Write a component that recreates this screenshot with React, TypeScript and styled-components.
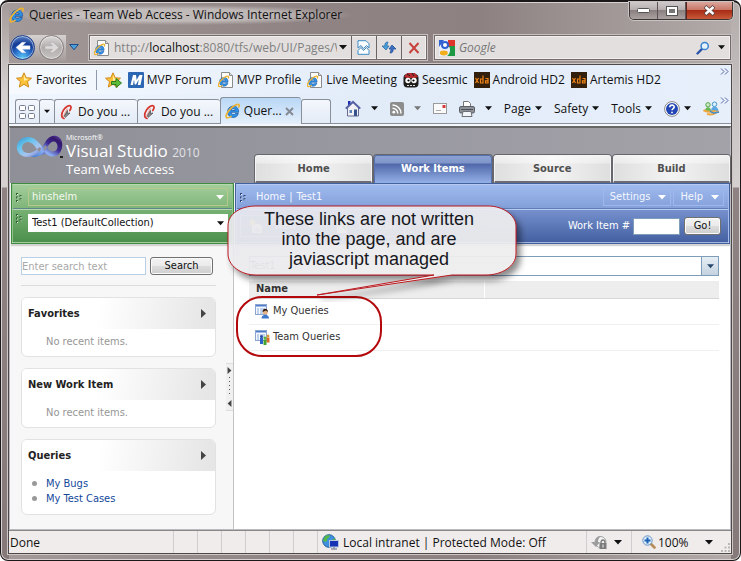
import React from 'react';
import styled, { createGlobalStyle, css } from 'styled-components';

const ui = '"Open Sans", "Segoe UI", sans-serif';
const page = '"DejaVu Sans Condensed", Tahoma, "DejaVu Sans", sans-serif';

const Global = createGlobalStyle`
  *, *::before, *::after { box-sizing: border-box; }
  html, body, #root { height: 100%; margin: 0; }
  body { background: #fff; font: 12px/16px ${ui}; color: #111; overflow: hidden; }
  button, input, select { font: inherit; color: inherit; margin: 0; padding: 0; border: 0; background: none; }
  a { color: inherit; text-decoration: none; }
  svg { display: block; flex: none; }
  ul { list-style: none; margin: 0; padding: 0; }
`;

/* ---------- window frame ---------- */

const Window = styled.div`
  min-height: 100%;
  display: flex;
  flex-direction: column;
  padding: 0 8px 6px 7px;
  border: 1px solid #1c1819;
  border-top-width: 2px;
  border-radius: 8px;
  box-shadow: inset 0 0 0 1px #d8d3d2;
  background:
    linear-gradient(180deg, #a49b9a00 0, #d5d0d0 90px, #d5d0d0 185px, #8e8382 186px, #857a79 100%) left / 8px 100% no-repeat,
    linear-gradient(180deg, #a49b9a00 0, #c5bfbf 90px, #d5d0d0 185px, #8e8382 186px, #857a79 100%) right / 9px 100% no-repeat,
    linear-gradient(90deg, #a39a99 0, #8f8483 40%, #8d8281 65%, #a39b9a 85%, #b3acab 100%);
`;

const TitleBar = styled.header`
  display: flex;
  align-items: flex-start;
  justify-content: space-between;
  height: 29px;
`;

const WindowTitle = styled.h1`
  display: flex;
  align-items: center;
  gap: 4px;
  margin: 3px 0 0;
  padding: 0 12px 0 1px;
  font-size: 12px;
  line-height: 20px;
  font-weight: 400;
  white-space: nowrap;
  background: radial-gradient(closest-side, #ffffff66 60%, #ffffff00 100%);
`;

const Caption = styled.div`
  display: flex;
  height: 18px;
  margin-right: -1px;
  border: 1px solid #3c3535;
  border-top: 0;
  border-radius: 0 0 5px 5px;
  overflow: hidden;
  box-shadow: 0 0 0 1px #c9c3c3;
`;

const CaptionButton = styled.button<{ $close?: boolean }>`
  display: grid;
  place-items: center;
  width: ${p => (p.$close ? 46 : 28)}px;
  border-left: ${p => (p.$close ? '1px solid #5a2420' : '0')};
  border-right: ${p => (p.$close ? '0' : '1px solid #5c5454')};
  background: ${p =>
    p.$close
      ? 'linear-gradient(#d9a79c, #c97463 48%, #a92c16 50%, #c85a38)'
      : 'linear-gradient(#cfcaca, #b5adad 48%, #8b8080 50%, #aaa1a1)'};
`;

const NavRow = styled.nav`
  display: flex;
  align-items: center;
  gap: 7px;
  height: 33px;
  padding: 0 1px 0 2px;
`;

const History = styled.div`
  display: flex;
  align-items: center;
  gap: 4px;
  height: 26px;
  margin-right: 2px;
  background: linear-gradient(#d6d1d1, #a49b9a) left / 56px 100% no-repeat;
  border-radius: 13px;
`;

const RoundButton = styled.button<{ $on?: boolean }>`
  display: grid;
  place-items: center;
  width: 25px;
  height: 25px;
  border-radius: 50%;
  border: 1px solid ${p => (p.$on ? '#1c3f87' : '#837b7b')};
  box-shadow: inset 0 0 0 1px #ffffff77;
  background: ${p =>
    p.$on
      ? 'radial-gradient(circle at 50% 95%, #59c8f5 0, #2a6fcb 35%, #123a94 60%, #7fa4de 100%)'
      : 'linear-gradient(#dcd9d9, #b2adad 50%, #c7c3c3)'};
`;

const PlainButton = styled.button`
  display: grid;
  place-items: center;
  min-width: 12px;
  min-height: 16px;
`;

const Field = styled.div<{ $grow: number }>`
  flex: ${p => p.$grow} 1 0;
  min-width: 0;
  display: flex;
  align-items: stretch;
  height: 25px;
  border: 1px solid #756b6b;
  outline: 1px solid #c6c0c0;
  background: #e2dfde;
  box-shadow: inset 0 0 0 1px #f1efef;
`;

const FieldIcon = styled.span`
  display: grid;
  place-items: center;
  width: 24px;
`;

const AddressText = styled.input`
  flex: 1;
  min-width: 0;
  width: 0;
  color: #777;
  outline: 0;
  &::placeholder { color: #777; font-style: italic; opacity: 1; }
`;

const Url = styled.div`
  flex: 1;
  min-width: 0;
  overflow: hidden;
  white-space: nowrap;
  line-height: 23px;
  color: #818181;
  strong { font-weight: 400; color: #111; }
`;

const FieldButton = styled.button<{ $line?: boolean; $slim?: boolean }>`
  display: grid;
  place-items: center;
  width: ${p => (p.$line ? 25 : p.$slim ? 14 : 18)}px;
  ${p => p.$slim && css`padding-right: 2px;`}
  ${p => p.$line && css`border-left: 1px solid #6d6464;`}
`;

const Client = styled.div`
  flex: 1;
  display: flex;
  flex-direction: column;
  min-height: 0;
  border: 1px solid #4f4848;
  background: #f4f8fd;
  box-shadow: 0 0 0 1px #cdc7c6;
`;

/* ---------- favorites, tabs and commands ---------- */

const Bar = styled.div`
  display: flex;
  align-items: center;
  height: 29px;
  padding: 0 2px 0 7px;
  background: linear-gradient(90deg, #f6faff, #e2ecf9 50%, #e6effa);
  white-space: nowrap;
`;

const FavLink = styled.a`
  display: flex;
  align-items: center;
  gap: 3px;
  margin-right: 6px;
`;

const Divider = styled.span`
  width: 1px;
  height: 20px;
  margin: 0 8px 0 3px;
  background: #8e9aac;
`;

const Chevron = styled.button`
  align-self: flex-start;
  margin: 3px 0 0 auto;
`;

const TabBar = styled.div`
  display: flex;
  align-items: flex-end;
  height: 30px;
  padding: 0 2px 0 6px;
  border-bottom: 1px solid #8a9099;
  background: linear-gradient(90deg, #f0f6fe, #e2ecf9 50%, #e6effa);
  white-space: nowrap;
`;

const Tab = styled.button<{ $w: number; $on?: boolean }>`
  display: flex;
  align-items: center;
  justify-content: ${p => (p.$w > 60 ? 'flex-start' : 'center')};
  gap: ${p => (p.$on ? 3 : 5)}px;
  width: ${p => p.$w}px;
  height: ${p => (p.$on ? 27 : 24)}px;
  padding: 0 ${p => (p.$w > 60 ? 4 : 0)}px;
  border: 1px solid #8a9099;
  border-bottom: 0;
  border-right-width: ${p => (p.$w === 30 ? 1 : 0)}px;
  border-radius: 3px 3px 0 0;
  background: ${p => (p.$on ? 'linear-gradient(#b9d7f6, #e4effb)' : 'linear-gradient(#f4f7fc, #e3ebf6)')};
  margin-bottom: ${p => (p.$on ? -1 : 0)}px;
`;

const Commands = styled.div`
  flex: 1;
  display: flex;
  align-items: center;
  align-self: stretch;
  padding-left: 14px;
`;

const Command = styled.button<{ $after?: number }>`
  display: flex;
  align-items: center;
  gap: ${p => (p.$after ? 10 : 4)}px;
  margin-right: ${p => p.$after || 12}px;
  height: 22px;
`;

/* ---------- site ---------- */

const Site = styled.main`
  flex: 1;
  display: flex;
  flex-direction: column;
  min-height: 0;
  margin-top: 2px;
  border: 1px solid #b9bbc0;
  border-top: 2px solid #666;
  background: #fff;
  font: 11px/14px ${page};
  color: #333;
`;

const Masthead = styled.div`
  display: flex;
  align-items: flex-end;
  justify-content: space-between;
  height: 55px;
  background: linear-gradient(90deg, #8e8f97, #a3a2a9);
`;

const Brand = styled.a`
  display: flex;
  align-items: flex-start;
  align-self: stretch;
  width: 245px;
  gap: 2px;
  padding: 6px 0 0 6px;
  color: #fff;
  font-family: ${ui};
`;

const BrandText = styled.span`
  display: flex;
  flex-direction: column;
  white-space: nowrap;
  small { font-size: 7px; line-height: 8px; }
  b { font-weight: 400; font-size: 17px; line-height: 18px; }
  b em { font-style: normal; font-size: 12px; color: #e2e2e6; }
  span { font-size: 13px; line-height: 15px; }
`;

const SiteTabs = styled.div`
  flex: 1;
  display: flex;
  gap: 2px;
`;

const SiteTab = styled.a<{ $on?: boolean }>`
  flex: 1;
  height: 28px;
  border: 1px solid ${p => (p.$on ? '#5672ae' : '#f5f5f5')};
  border-bottom: ${p => (p.$on ? '0' : '2px solid #6c6c74')};
  border-radius: 3px 3px 0 0;
  box-shadow: 0 0 0 1px #66666c;
  font-weight: 700;
  line-height: 25px;
  text-align: center;
  color: ${p => (p.$on ? '#fff' : '#505050')};
  background: ${p =>
    p.$on
      ? 'linear-gradient(#8ba1d1 0, #7f96ca 7px, #5068a9 8px, #98b4ea 28px)'
      : 'linear-gradient(90deg, #ffffff00, #ffffffa0 50%, #ffffff00), linear-gradient(#f0f0f0 0, #eaeaea 7px, #dedede 8px, #dfdfdf)'};
`;

const Columns = styled.div`
  flex: 1;
  display: flex;
  min-height: 0;
`;

const Sidebar = styled.aside`
  position: relative;
  display: flex;
  flex-direction: column;
  width: 224px;
  flex: none;
  border-right: 1px solid #c4c4c4;
  background: #f7f7f7;
`;

const Content = styled.section`
  position: relative;
  flex: 1;
  min-width: 0;
  display: flex;
  flex-direction: column;
  padding-left: 1px;
`;

const Panel = styled.div<{ $blue?: boolean }>`
  margin-right: ${p => (p.$blue ? 0 : -1)}px;
  margin-left: ${p => (p.$blue ? 0 : 1)}px;
  border: 1px solid ${p => (p.$blue ? '#41629f' : '#418a41')};
  box-shadow: 0 2px 1px #d3d3d3;
  color: #fff;
`;

const PanelRow = styled.div<{ $tone: 'greenTop' | 'greenLow' | 'blueTop' | 'blueLow' }>`
  display: flex;
  align-items: center;
  height: ${p => (p.$tone.endsWith('Top') ? 25 : 34)}px;
  padding: 0 ${p => (p.$tone === 'blueLow' ? 7 : 4)}px 0 3px;
  ${p => p.$tone === 'greenLow' && css`align-items: flex-start; padding-top: 4px;`}
  border-top: 1px solid ${p => (p.$tone.startsWith('green') ? '#b5d9ad' : '#b8caf2')};
  border-left: 1px solid ${p => (p.$tone.startsWith('green') ? '#8fc489' : '#a5bbe9')};
  border-right: 1px solid ${p => (p.$tone.startsWith('green') ? '#8fc489' : '#a5bbe9')};
  ${p => p.$tone.endsWith('Low') && css`border-bottom: 1px solid #ffffff55;`}
  ${p => p.$tone.endsWith('Top') && css`box-shadow: inset 0 -1px 0 #41609a88;`}
  background: ${p =>
    ({
      greenTop: 'linear-gradient(#a3cd9b, #7db478)',
      greenLow: 'linear-gradient(#76b173, #4c8f4c)',
      blueTop: 'linear-gradient(#9fbaee, #829fd9)',
      blueLow: 'linear-gradient(#7590cd, #4560a1)',
    })[p.$tone]};
`;

const SelectBox = styled.label<{ $clear?: boolean }>`
  flex: 1;
  display: flex;
  align-items: center;
  height: 18px;
  margin-left: 6px;
  padding: 0 3px;
  border: 1px solid ${p => (p.$clear ? '#b5c98b' : '#fff')};
  background: ${p => (p.$clear ? 'none' : '#fff')};
  color: ${p => (p.$clear ? '#f5f8f0' : '#111')};
  select { flex: 1; min-width: 0; appearance: none; outline: 0; line-height: 14px; }
`;

const Crumbs = styled.div`
  flex: 1;
  display: flex;
  gap: 4px;
  margin-left: 10px;
  color: #f4f7ff;
`;

const MenuButton = styled.button`
  display: flex;
  align-items: center;
  gap: 8px;
  height: 17px;
  padding: 0 4px 0 6px;
  margin-left: 2px;
  border: 1px solid #9fb7ea;
  color: #f4f7ff;
`;

const ToolButton = styled.button`
  display: flex;
  align-items: center;
  gap: 10px;
  height: 22px;
  padding: 0 8px;
  margin-right: 4px;
  border: 1px solid #a9bce8;
  color: #fff;
`;

const ItemLabel = styled.label`
  display: flex;
  align-items: center;
  gap: 3px;
  margin-left: auto;
  white-space: nowrap;
  input { width: 47px; height: 17px; border: 1px solid #7f9db9; background: #fff; color: #111; }
`;

const PushButton = styled.button<{ $w: number }>`
  width: ${p => p.$w}px;
  height: 18px;
  margin-left: 4px;
  border: 1px solid #707070;
  border-radius: 3px;
  box-shadow: inset 0 0 0 1px #fafafa;
  background: linear-gradient(#f2f2f2, #ebebeb 50%, #dcdcdc 51%, #cfcfcf);
  color: #111;
  line-height: 14px;
`;

const SideBody = styled.div`
  display: flex;
  flex-direction: column;
  gap: 11px;
  padding: 13px 17px 12px 11px;
`;

const SearchRow = styled.form`
  display: flex;
  align-items: center;
  padding: 0 3px 10px 0;
  border-bottom: 1px solid #dcdcdc;
  input {
    flex: 1;
    min-width: 0;
    height: 18px;
    border: 1px solid #b8cfe5;
    background: #fff;
    outline: 0;
  }
  input::placeholder { color: #a8a8a8; opacity: 1; }
`;

const Card = styled.section`
  border: 1px solid #e2e2e2;
  border-radius: 6px;
  background: #fff;
  overflow: hidden;
`;

const CardHead = styled.h2`
  display: flex;
  align-items: center;
  justify-content: space-between;
  height: 31px;
  margin: 0;
  padding: 0 9px 0 6px;
  font-size: 11px;
  line-height: 14px;
  color: #222;
  background: linear-gradient(100deg, #fff 40%, #e6e6e6 95%);
`;

const Empty = styled.p`
  margin: 0;
  padding: 6px 0 7px 24px;
  color: #969696;
`;

const LinkList = styled.ul`
  padding: 5px 0 8px 10px;
  line-height: 15px;
  color: #12489c;
  li { display: flex; align-items: center; gap: 9px; }
  li::before { content: ''; width: 5px; height: 5px; border-radius: 50%; background: #999; }
`;

const Splitter = styled.button`
  position: absolute;
  right: 0;
  top: 180px;
  width: 7px;
  height: 48px;
  display: flex;
  flex-direction: column;
  align-items: center;
  justify-content: space-between;
  padding: 3px 0;
  background: #f0f0f0;
  border-top: 1px solid #ddd;
  border-bottom: 1px solid #ddd;
`;

const Body = styled.div`
  flex: 1;
  padding: 12px 11px 0 14px;
`;

const Combo = styled.label`
  display: flex;
  align-items: stretch;
  height: 20px;
  border: 1px solid #7f9db9;
  background: #fff;
  select { flex: 1; min-width: 0; appearance: none; outline: 0; }
  span { display: grid; place-items: center; width: 17px; border-left: 1px solid #7f9db9; background: linear-gradient(#e6eef5, #c4d3e0); }
`;

const Grid = styled.table`
  width: 100%;
  margin-top: 5px;
  border-collapse: collapse;
  table-layout: fixed;
  th { height: 17px; padding: 0 7px; text-align: left; background: #ededed; border-bottom: 1px solid #d6d6d6; }
  th + th { border-left: 1px solid #fff; }
  td { height: 26px; padding: 0 6px; border-bottom: 1px solid #f0f0f0; }
`;

const Query = styled.a`
  display: flex;
  align-items: center;
  gap: 3px;
`;

const Ring = styled.div`
  position: absolute;
  left: 2px;
  top: 113px;
  width: 146px;
  height: 61px;
  border: 2px solid #b3090c;
  border-radius: 26px;
  pointer-events: none;
`;

const Callout = styled.div`
  position: absolute;
  left: -8px;
  top: 21px;
  width: 302px;
  height: 98px;
  pointer-events: none;
  > svg { position: absolute; left: 0; top: 0; }
  p {
    position: relative;
    width: 286px;
    margin: 5px 0 0;
    text-align: center;
    font: 18px/20px "Liberation Sans", Arial, sans-serif;
    color: #171720;
  }
`;

/* ---------- status ---------- */

const Status = styled.footer`
  display: flex;
  align-items: stretch;
  height: 23px;
  border-top: 1px solid #8c8888;
  background: #f0ecec;
  line-height: 21px;
  white-space: nowrap;
`;

const Cell = styled.div<{ $w?: number }>`
  display: flex;
  align-items: center;
  gap: 4px;
  ${p => (p.$w ? css`width: ${p.$w}px;` : css`flex: 1; min-width: 0;`)}
  padding: 0 0 0 ${p => (p.$w === 24 ? 0 : p.$w === 165 ? 1 : 4)}px;
  border-right: 1px solid #cfcdd0;
  &:last-child { border-right: 0; }
`;

const ZoomLevel = styled.div`
  flex: 1;
  display: flex;
  align-items: center;
  gap: 2px;
  padding-left: 6px;
  button { margin-left: 12px; }
`;

const ResizeGrip = styled.span`
  align-self: flex-end;
  padding: 0 1px 1px 0;
`;

/* ---------- drawings ---------- */

const Caret = ({ c = '#111', w = 8 }: { c?: string; w?: number }) => (
  <svg width={w} height="5" viewBox="0 0 8 5"><path d="M0 0h8L4 4.5z" fill={c} /></svg>
);

const Right = ({ small, flip }: { small?: boolean; flip?: boolean }) => (
  <svg width="5" height={small ? 7 : 9} viewBox="0 0 5 9"><path d={flip ? 'M5 0v9L0 4.5z' : 'M0 0v9l5-4.5z'} fill="#444" /></svg>
);

const IeGlyph = () => (
  <g>
    <path d="M13.600 9.300H6c.2 1.500 1.100 2.200 2.400 2.200 1 0 1.600-.3 2-1h2.900c-.7 2.600-2.500 3.900-5.100 3.900C4.900 14.400 2.600 12.200 2.600 8.900s2.300-5.800 5.600-5.800c3.500 0 5.500 2.300 5.400 6.200zM6.100 7.300h4.200C10.100 6.100 9.400 5.500 8.200 5.500S6.300 6.100 6.100 7.300z" fill="#2f93e8" stroke="#154f9f" strokeWidth=".7" />
    <path d="M1.700 14.600C-.6 12 5.500 4.200 10.600 2c2.700-1.200 4.300-.5 3.300 1.900" fill="none" stroke="#efb32f" strokeWidth="1.700" strokeLinecap="round" />
    <path d="M1.700 14.600c1.300.9 3-.1 4.600-1.300" fill="none" stroke="#efb32f" strokeWidth="1.400" strokeLinecap="round" />
  </g>
);
const Ie = () => <svg width="16" height="16" viewBox="0 0 16 16"><IeGlyph /></svg>;
const IePage = () => (
  <svg width="16" height="16" viewBox="0 0 16 16">
    <path d="M3.500.5h8l3 3v12h-11z" fill="#fdfdfd" stroke="#8b8b8b" />
    <path d="M11.500.5v3h3" fill="#ddd" stroke="#8b8b8b" />
    <g transform="translate(-.5 3) scale(.78)"><IeGlyph /></g>
  </svg>
);
const Star = ({ add }: { add?: boolean }) => (
  <svg width="17" height="16" viewBox="0 0 17 16">
    <path d="M8 .8l2.200 4.900 5.300.5-4 3.500 1.200 5.400L8 12.300l-4.700 2.800 1.200-5.400-4-3.500 5.300-.5z" fill="#fcc13a" stroke="#cf8a1b" />
    <path d="M8 3l1.500 3.600 3 .4L8 9z" fill="#fff0a5" />
    {add && <path d="M6.500 9.500h4.500v-3l5.500 4.500-5.500 4.500v-3H6.500z" fill="#5cbd3a" stroke="#2c7b1c" />}
  </svg>
);
const MIcon = () => (
  <svg width="16" height="16" viewBox="0 0 16 16">
    <rect width="16" height="16" rx="1" fill="#2d66b2" />
    <path d="M2.500 13L5 3h3l.6 5L11.500 3h3L12.500 13H9.800l1-5.500L8 12.500H6.700L6 7.500 5 13z" fill="#fff" />
  </svg>
);
const Seesmic = () => (
  <svg width="16" height="16" viewBox="0 0 16 16">
    <rect x=".5" y="2" width="15" height="13.500" rx="4" fill="#1f1c1c" />
    <path d="M1 5l3-4h8l3 4-3 1H4z" fill="#b52a2c" />
    <path d="M4 2l3 2M9 1l2 3" stroke="#222" />
    <circle cx="5" cy="8.500" r="2.700" fill="#fff" /><circle cx="11" cy="8.500" r="2.700" fill="#fff" />
    <circle cx="5.500" cy="8.500" r="1.100" /><circle cx="10.500" cy="8.500" r="1.100" />
    <path d="M4 13.500h8" stroke="#ddd" strokeDasharray="2 1" />
  </svg>
);
const Xda = () => (
  <svg width="16" height="16" viewBox="0 0 16 16">
    <rect width="16" height="16" fill="#33200c" />
    <path d="M1.500 6l3 5M4.500 6l-3 5M9 3.500V11H6.500V7H9M11.500 6.500H14V11h-2.500V8.800H14" fill="none" stroke="#f08317" strokeWidth="1.200" />
  </svg>
);
const Feather = () => (
  <svg width="14" height="16" viewBox="0 0 14 16">
    <path d="M5 14.500C2 14 2 10 4.500 6 7 2.500 10 1 11.500 2c1 1 .3 3-.7 4.500" fill="none" stroke="#d6372f" strokeWidth="1.700" strokeLinecap="round" />
    <path d="M4.500 12.500l4-8" stroke="#f0a8a4" strokeWidth="1.500" />
    <path d="M5 12.500l3.500-6v3l2.500-.5-5 4.500" fill="#888" stroke="#555" strokeWidth=".8" />
  </svg>
);
const Chev = () => (
  <svg width="9" height="7" viewBox="0 0 9 7"><path d="M1 .5l3 3-3 3M5 .5l3 3-3 3" fill="none" stroke="#5966a8" /></svg>
);
const QuickTabs = () => (
  <svg width="16" height="14" viewBox="0 0 16 14">
    {[[0, 0], [9, 0], [0, 8], [9, 8]].map(([x, y]) => (
      <rect key={`${x}-${y}`} x={x + 0.5} y={y + 0.5} width="6" height="5" rx="1" fill="#fff" stroke="#747d91" />
    ))}
  </svg>
);
const Home = () => (
  <svg width="16" height="17" viewBox="0 0 16 17">
    <path d="M3 1h2.500v4H3z" fill="#1e2bb0" />
    <path d="M2.500 8v8h11V8L8 2.500z" fill="#f2f2f6" stroke="#666b8f" />
    <path d="M.7 8.700L8 1.800l7.300 6.900" fill="none" stroke="#5662a5" strokeWidth="1.800" />
    <path d="M4.500 10H7v3H4.500z" fill="#5c83b8" /><path d="M9 9.500h3V16H9z" fill="#35528c" />
  </svg>
);
const Rss = () => (
  <svg width="14" height="14" viewBox="0 0 14 14">
    <rect width="14" height="14" rx="2" fill="#8d8d8d" />
    <circle cx="3.800" cy="10.200" r="1.400" fill="#fff" />
    <path d="M2.500 6.200a5.300 5.300 0 0 1 5.300 5.300M2.500 3a8.500 8.500 0 0 1 8.500 8.500" fill="none" stroke="#fff" strokeWidth="1.500" />
  </svg>
);
const Mail = () => (
  <svg width="14" height="11" viewBox="0 0 14 11">
    <rect x=".5" y=".5" width="13" height="10" fill="#fafafa" stroke="#9b9b9b" />
    <path d="M9.500 2h3v3h-3z" fill="#d63b3b" /><path d="M3 7.500h5" stroke="#aaa" />
  </svg>
);
const Printer = () => (
  <svg width="16" height="16" viewBox="0 0 16 16">
    <path d="M4.500 6V.5h5l2 2V6" fill="#fff" stroke="#777" />
    <rect x=".5" y="5.500" width="15" height="6.500" rx="1.500" fill="#8d9198" stroke="#5b5e65" />
    <path d="M2 8.500h12" stroke="#4c4f55" /><path d="M4 10.500h8l1 5H3z" fill="#f4f6fa" stroke="#6c7078" />
  </svg>
);
const Help = () => (
  <svg width="16" height="16" viewBox="0 0 16 16">
    <circle cx="8" cy="8" r="7.400" fill="#fff" stroke="#888" />
    <circle cx="8" cy="8" r="6" fill="#2245b4" />
    <path d="M5.800 6.300C5.800 3.300 10.300 3.500 10.200 6c0 1.600-2.200 1.600-2.200 3.300M8 10.700v1.600" fill="none" stroke="#fff" strokeWidth="1.600" />
  </svg>
);
const People = () => (
  <svg width="17" height="15" viewBox="0 0 17 15">
    <path d="M2 10c0-5 6-5 6 0z" fill="#65b853" /><circle cx="5" cy="3.800" r="2.200" fill="#cdeac4" stroke="#58a34b" />
    <path d="M8 10c0-6 7-6 7.500 0z" fill="#5aa7e0" /><circle cx="11.500" cy="3.300" r="2.300" fill="#d8effc" stroke="#4c98cf" />
    <path d="M.5 9c3 3 8 1.500 12 1M4 13c4 1 8 0 11.500-3" fill="none" stroke="#efa740" strokeWidth="2" />
    <path d="M7 10c3 3 5 2 9 1" fill="none" stroke="#3e8fd0" strokeWidth="1.500" />
  </svg>
);
const Google = () => (
  <svg width="16" height="16" viewBox="0 0 16 16">
    <rect width="16" height="16" fill="#e8eefb" />
    <path d="M9 0h7v7H9z" fill="#e0352b" /><path d="M10 6h6v10H8c3-2 4-6 2-10z" fill="#1d9a43" />
    <path d="M0 0h5L0 7z" fill="#2f62d0" /><circle cx="6" cy="5" r="3" fill="#fff" stroke="#2f62d0" strokeWidth="2" />
    <ellipse cx="4.800" cy="13" rx="4" ry="2.400" fill="#f3ae1b" />
  </svg>
);
const Torn = () => (
  <svg width="13" height="15" viewBox="0 0 13 15">
    <path d="M1 6V.7h8l3 3V8L9.500 5.500 6.500 8.500 4 5.500 1 8zM1 10.500l3-3 2.500 3 3-3 2.500 3v3.800H1z" fill="#fafdff" stroke="#3d8bc4" />
  </svg>
);
const Refresh = () => (
  <svg width="16" height="13" viewBox="0 0 16 13">
    <path d="M7 1C4.500.8 3.800 2.500 3.800 5H1l4 4 3-4H6c0-1.500.3-2 1-4z" fill="#4a9fd8" stroke="#2164a6" strokeWidth=".7" />
    <path d="M9 12c2.500.2 3.200-1.500 3.200-4H15l-4-4-3 4h2c0 1.500-.3 2-1 4z" fill="#3c70c4" stroke="#1d4890" strokeWidth=".7" />
  </svg>
);
const Stop = () => (
  <svg width="12" height="12" viewBox="0 0 12 12"><path d="M1.500 1l9 10M10.500 1l-9 10" stroke="#c8423c" strokeWidth="2" /></svg>
);
const Lens = () => (
  <svg width="14" height="14" viewBox="0 0 14 14">
    <path d="M1.500 12.500l4.300-4.300" stroke="#2c55a8" strokeWidth="2.400" strokeLinecap="round" />
    <circle cx="8.700" cy="5" r="3.600" fill="#e6f3fc" stroke="#3b82cf" strokeWidth="1.500" />
  </svg>
);
const Arrow = ({ back }: { back?: boolean }) => (
  <svg width="16" height="15" viewBox="0 0 16 15">
    <path d={back ? 'M15 5.800v3.400H7.500l3.300 3.500H7L1 7.500l6-5.200h3.800L7.500 5.800z' : 'M1 5.800v3.400h7.500l-3.300 3.500H9l6-5.200-6-5.200H5.200l3.300 3.500z'} fill={back ? '#fff' : '#dcdada'} stroke={back ? '#c9d8f1' : '#aaa5a5'} strokeWidth=".5" />
  </svg>
);
const RecentArrow = () => (
  <svg width="10" height="7" viewBox="0 0 10 7"><path d="M.7.500h8.600L5 5.800z" fill="#4ca0dd" stroke="#1f4b85" /></svg>
);
const Grip = ({ c }: { c: string }) => (
  <svg width="6" height="9" viewBox="0 0 6 9">
    <path d="M0 0h2v2H0zM0 3.500h2v2H0zM0 7h2v2H0zM3.500 2h2v2h-2zM3.500 5.200h2v2h-2z" fill={c} />
    <path d="M1 1h1v1H1zM1 4.500h1v1H1zM1 8h1v1H1zM4.500 3h1v1h-1zM4.500 6.200h1v1h-1z" fill="#fff" />
  </svg>
);
const StudioLogo = () => (
  <svg width="48" height="26" viewBox="0 0 48 26">
    <defs>
      <linearGradient id="loopLeft" x1="0" x2="1" y2="1"><stop stopColor="#3a8fcb" /><stop offset=".3" stopColor="#62c4ee" /><stop offset=".6" stopColor="#a9c4f0" /><stop offset="1" stopColor="#4a55bd" /></linearGradient>
      <linearGradient id="loopRight" x1="0" y1="1" x2="1" y2="0"><stop stopColor="#3a7ad2" /><stop offset=".35" stopColor="#8fb0f2" /><stop offset=".6" stopColor="#3d2a92" /><stop offset=".8" stopColor="#32176c" /><stop offset="1" stopColor="#6a4fb5" /></linearGradient>
    </defs>
    <path fillRule="evenodd" d="M31 19C25 12 21 3 12 3 5 3 0 8 1 15c1 5 5 8 11 8 6-.3 10-3 14-7l-2.500-3C20 16.500 17 19 12.500 19 8.500 19 6 16.500 6 13.500S8.500 8 12 8c6 0 9 9 14 13z" fill="url(#loopLeft)" />
    <path fillRule="evenodd" d="M15 22.500c8-1 10-8 14-14C32 3 36 1 40 2c5 1 7 6 6 11.500C45 19 41 23 36 22.500c-4.500-.5-7-3.500-9.500-7l3-4.500c2 3 4 6.500 7 6.500s5-2 5-5-1.500-5-4-5c-3 0-5 4-8 8.500-3.500 5-8 8-14.500 6.500z" fill="url(#loopRight)" />
    <path d="M44 22h3v2h-3z" fill="#222" />
  </svg>
);
const QueryIcon = ({ team }: { team?: boolean }) => (
  <svg width="15" height="15" viewBox="0 0 15 15">
    <rect x=".5" y=".5" width="11" height="10" fill="#f4f8fd" stroke="#8ba5d0" />
    <path d="M1 1h10v1.500H1z" fill="#4e7dca" />
    <path d="M2 5h2M5 5h5M2 7h2M5 7h5M2 9h2M5 9h3" stroke="#8eabd9" />
    {team ? (
      <g>
        <path d="M5 8h3v6H5z" fill="#2f63cb" /><path d="M11.500 7.500h3v5h-3z" fill="#dd6b28" /><path d="M8.500 9.500h3V15h-3z" fill="#42a52f" />
        <circle cx="6.500" cy="6.500" r="1.500" fill="#2450a8" /><circle cx="13" cy="6" r="1.500" fill="#d79a33" /><circle cx="10" cy="8" r="1.500" fill="#58b742" />
      </g>
    ) : (
      <g><path d="M6.500 14.500c0-5 7.500-5 7.500 0z" fill="#3f77cc" /><circle cx="10.300" cy="8" r="2.500" fill="#e3b088" /><path d="M7.500 8c0-4.500 5.500-4.500 5.500 0l-2-1.500z" fill="#2c1b12" /></g>
    )}
  </svg>
);
const Globe = () => (
  <svg width="17" height="16" viewBox="0 0 17 16">
    <circle cx="7" cy="7" r="6.300" fill="#3f8fdc" stroke="#28609e" />
    <path d="M2 4c3-4 5-3 6-2-1 2-3 2-3 4s-2 2-4 1zM8 7c2-2 4-1 5-3 1 3 0 5-2 6z" fill="#55b947" />
    <rect x="7.500" y="6.500" width="9" height="6.500" fill="#1533b4" stroke="#b9c8de" /><path d="M9 15h6M12 13v2" stroke="#8a93a3" strokeWidth="1.500" />
  </svg>
);
const Privacy = () => (
  <svg width="17" height="15" viewBox="0 0 17 15">
    <circle cx="9.500" cy="7" r="5.500" fill="#f3f3f3" stroke="#a5a5a5" /><path d="M11 1C6 1 4.500 3 4 7H0l5 5 4-5H7c0-3 1-5 4-6z" fill="#9c9c9c" />
    <rect x="8.500" y="8" width="7" height="6" fill="#7c7c7c" /><path d="M10 8c0-4 4-4 4 0" fill="none" stroke="#7c7c7c" strokeWidth="1.300" /><path d="M12 9.500v3" stroke="#eee" />
  </svg>
);
const ZoomIcon = () => (
  <svg width="14" height="14" viewBox="0 0 14 14">
    <path d="M8.500 8.500l4 4" stroke="#b68c58" strokeWidth="2.600" strokeLinecap="round" />
    <circle cx="5.500" cy="5.500" r="4.700" fill="#dceefb" stroke="#6b94c4" /><path d="M5.500 2.500v6M2.500 5.500h6" stroke="#1d62b8" strokeWidth="2" />
  </svg>
);
const NewIcon = () => (
  <svg width="16" height="15" viewBox="0 0 16 15">
    <path d="M2.500 4.500h8l3 3v7h-11z" fill="#fff" stroke="#5c6c90" /><path d="M5 10h6M5 12h6" stroke="#7d8cae" /><circle cx="3.500" cy="3.500" r="3" fill="#ffdf4a" />
  </svg>
);
const ReloadIcon = () => (
  <svg width="14" height="15" viewBox="0 0 14 15">
    <path d="M1.500.5h8l3 3v11h-11z" fill="#fff" stroke="#5c6c90" /><path d="M4 8c0-4 6-4 6 0H8l3 3 3-3" fill="none" stroke="#3aa23a" strokeWidth="1.500" />
  </svg>
);
const MinGlyph = () => (
  <svg width="13" height="6"><rect x=".5" y=".5" width="12" height="4" rx="1" fill="#fff" stroke="#555" /></svg>
);
const MaxGlyph = () => (
  <svg width="12" height="10"><rect x="1.500" y="1.500" width="9" height="7" fill="none" stroke="#555" strokeWidth="3" /><rect x="2" y="2" width="8" height="6" fill="#777" stroke="#fff" strokeWidth="2" /></svg>
);
const CloseGlyph = () => (
  <svg width="13" height="11" viewBox="0 0 13 11"><path d="M2 1.500l9 8M11 1.500l-9 8" stroke="#5c4444" strokeWidth="4" /><path d="M2.500 2l8 7M10.500 2l-8 7" stroke="#fff" strokeWidth="2.400" /></svg>
);
const TabClose = () => (
  <svg width="9" height="9" viewBox="0 0 9 9"><path d="M1 1l7 7M8 1L1 8" stroke="#858b94" strokeWidth="2" /></svg>
);
const Balloon = () => (
  <svg width="302" height="98" viewBox="0 0 302 98">
    <defs>
      <linearGradient id="balloonFill" y2="1"><stop stopColor="#ececf2" /><stop offset=".6" stopColor="#f2f2f3" /><stop offset="1" stopColor="#f2f2f2" /></linearGradient>
      <filter id="balloonShadow" x="-5%" y="-5%" width="112%" height="125%"><feDropShadow dx="4" dy="5" stdDeviation="3" floodOpacity=".5" /></filter>
    </defs>
    <path d="M30 2H262C278 2 290 12 290 22V50C290 62 276 71 260 71H226L91 91 208 71H30C14 71 2 61 2 50V22C2 10 14 2 30 2Z" fill="url(#balloonFill)" fillOpacity=".9" stroke="#b81a1f" filter="url(#balloonShadow)" />
  </svg>
);

const favorites: [React.ReactNode, string][] = [
  [<MIcon />, 'MVP Forum'],
  [<IePage />, 'MVP Profile'],
  [<IePage />, 'Live Meeting'],
  [<Seesmic />, 'Seesmic'],
  [<Xda />, 'Android HD2'],
  [<Xda />, 'Artemis HD2'],
];

const SideCard = ({ title, children }: { title: string; children: React.ReactNode }) => (
  <Card>
    <CardHead>{title}<Right /></CardHead>
    {children}
  </Card>
);

export default function App() {
  return (
    <>
      <Global />
      <Window>
        <TitleBar>
          <WindowTitle><Ie />Queries - Team Web Access - Windows Internet Explorer</WindowTitle>
          <Caption>
            <CaptionButton aria-label="Minimize"><MinGlyph /></CaptionButton>
            <CaptionButton aria-label="Maximize"><MaxGlyph /></CaptionButton>
            <CaptionButton $close aria-label="Close"><CloseGlyph /></CaptionButton>
          </Caption>
        </TitleBar>
        <NavRow>
          <History>
            <RoundButton $on aria-label="Back"><Arrow back /></RoundButton>
            <RoundButton aria-label="Forward"><Arrow /></RoundButton>
            <PlainButton aria-label="Recent pages"><RecentArrow /></PlainButton>
          </History>
          <Field $grow={338}>
            <FieldIcon><IePage /></FieldIcon>
            <Url>http://<strong>localhost</strong>:8080/tfs/web/UI/Pages/W</Url>
            <FieldButton $slim aria-label="Show address list"><Caret /></FieldButton>
            <FieldButton $line aria-label="Compatibility view"><Torn /></FieldButton>
            <FieldButton $line aria-label="Refresh"><Refresh /></FieldButton>
            <FieldButton $line aria-label="Stop"><Stop /></FieldButton>
          </Field>
          <Field $grow={297}>
            <FieldIcon><Google /></FieldIcon>
            <AddressText aria-label="Search the web" placeholder="Google" />
            <FieldButton aria-label="Search"><Lens /></FieldButton>
            <FieldButton aria-label="Search options"><Caret w={7} /></FieldButton>
          </Field>
        </NavRow>
        <Client>
          <Bar>
            <FavLink href="#"><Star />Favorites</FavLink>
            <Divider />
            <FavLink href="#" aria-label="Add to favorites bar"><Star add /></FavLink>
            {favorites.map(([icon, name]) => <FavLink href="#" key={name}>{icon}{name}</FavLink>)}
            <Chevron aria-label="More favorites"><Chev /></Chevron>
          </Bar>
          <TabBar>
            <Tab $w={24} aria-label="Quick tabs"><QuickTabs /></Tab>
            <Tab $w={15} aria-label="Tab list"><Caret w={6} /></Tab>
            <Tab $w={83}><Feather />Do you ...</Tab>
            <Tab $w={83}><Feather />Do you ...</Tab>
            <Tab $w={81} $on><Ie />Quer...<TabClose /></Tab>
            <Tab $w={30} aria-label="New tab" />
            <Commands>
              <Command $after={12} aria-label="Home"><Home /><Caret w={7} /></Command>
              <Command $after={12} aria-label="Feeds"><Rss /><Caret w={7} c="#777" /></Command>
              <Command $after={12} aria-label="Read mail"><Mail /></Command>
              <Command $after={12} aria-label="Print"><Printer /><Caret w={7} /></Command>
              <Command>Page<Caret w={7} /></Command>
              <Command>Safety<Caret w={7} /></Command>
              <Command>Tools<Caret w={7} /></Command>
              <Command aria-label="Help"><Help /><Caret w={7} /></Command>
              <PlainButton aria-label="Messenger"><People /></PlainButton>
              <Chevron aria-label="More commands"><Chev /></Chevron>
            </Commands>
          </TabBar>
          <Site>
            <Masthead>
              <Brand href="#">
                <StudioLogo />
                <BrandText><small>Microsoft®</small><b>Visual Studio <em>2010</em></b><span>Team Web Access</span></BrandText>
              </Brand>
              <SiteTabs>
                <SiteTab href="#">Home</SiteTab>
                <SiteTab href="#" $on>Work Items</SiteTab>
                <SiteTab href="#">Source</SiteTab>
                <SiteTab href="#">Build</SiteTab>
              </SiteTabs>
            </Masthead>
            <Columns>
              <Sidebar>
                <Panel>
                  <PanelRow $tone="greenTop">
                    <Grip c="#2c652c" />
                    <SelectBox $clear><select aria-label="User"><option>hinshelm</option></select><Caret c="#fff" /></SelectBox>
                  </PanelRow>
                  <PanelRow $tone="greenLow">
                    <Grip c="#2c652c" />
                    <SelectBox><select aria-label="Project"><option>Test1 (DefaultCollection)</option></select><Caret w={7} /></SelectBox>
                  </PanelRow>
                </Panel>
                <SideBody>
                  <SearchRow onSubmit={e => e.preventDefault()}>
                    <input aria-label="Search text" placeholder="Enter search text" />
                    <PushButton $w={63}>Search</PushButton>
                  </SearchRow>
                  <SideCard title="Favorites"><Empty>No recent items.</Empty></SideCard>
                  <SideCard title="New Work Item"><Empty>No recent items.</Empty></SideCard>
                  <SideCard title="Queries">
                    <LinkList><li><a href="#">My Bugs</a></li><li><a href="#">My Test Cases</a></li></LinkList>
                  </SideCard>
                </SideBody>
                <Splitter aria-label="Resize sidebar">
                  <Right small />
                  <svg width="1" height="20"><path d="M.5 0v20" stroke="#555" strokeDasharray="1 3" /></svg>
                  <Right small flip />
                </Splitter>
              </Sidebar>
              <Content>
                <Panel $blue>
                  <PanelRow $tone="blueTop">
                    <Grip c="#2b4580" />
                    <Crumbs><a href="#">Home</a><span>|</span><a href="#">Test1</a></Crumbs>
                    <MenuButton>Settings<Caret c="#fff" /></MenuButton>
                    <MenuButton>Help<Caret c="#fff" /></MenuButton>
                  </PanelRow>
                  <PanelRow $tone="blueLow">
                    <ToolButton><NewIcon />New<Caret c="#fff" w={6} /></ToolButton>
                    <ToolButton><ReloadIcon />Refresh</ToolButton>
                    <ItemLabel>Work Item #<input /></ItemLabel>
                    <PushButton $w={37}>Go!</PushButton>
                  </PanelRow>
                </Panel>
                <Body>
                  <Combo><select aria-label="Query folder"><option>Test1</option></select><span><Caret c="#27496d" w={7} /></span></Combo>
                  <Grid>
                    <thead><tr><th>Name</th><th aria-label="Details" /></tr></thead>
                    <tbody>
                      <tr><td><Query href="#"><QueryIcon />My Queries</Query></td><td /></tr>
                      <tr><td><Query href="#"><QueryIcon team />Team Queries</Query></td><td /></tr>
                    </tbody>
                  </Grid>
                </Body>
                <Ring />
                <Callout>
                  <Balloon />
                  <p>These links are not written<br />into the page, and are<br />javiascript managed</p>
                </Callout>
              </Content>
            </Columns>
          </Site>
          <Status>
            <Cell $w={165}>Done</Cell>
            {[0, 1, 2, 3, 4, 5].map(i => <Cell $w={24} key={i} />)}
            <Cell><Globe />Local intranet | Protected Mode: Off</Cell>
            <Cell $w={45}><Privacy /><PlainButton aria-label="Privacy options"><Caret /></PlainButton></Cell>
            <Cell $w={99}>
              <ZoomLevel><ZoomIcon />100%<PlainButton aria-label="Zoom level"><Caret /></PlainButton></ZoomLevel>
              <ResizeGrip><svg width="9" height="9" viewBox="0 0 9 9"><path d="M7 0h2v2H7zM7 3.500h2v2H7zM3.500 3.500h2v2h-2zM7 7h2v2H7zM3.500 7h2v2h-2zM0 7h2v2H0z" fill="#bcb8b8" /></svg></ResizeGrip>
            </Cell>
          </Status>
        </Client>
      </Window>
    </>
  );
}
